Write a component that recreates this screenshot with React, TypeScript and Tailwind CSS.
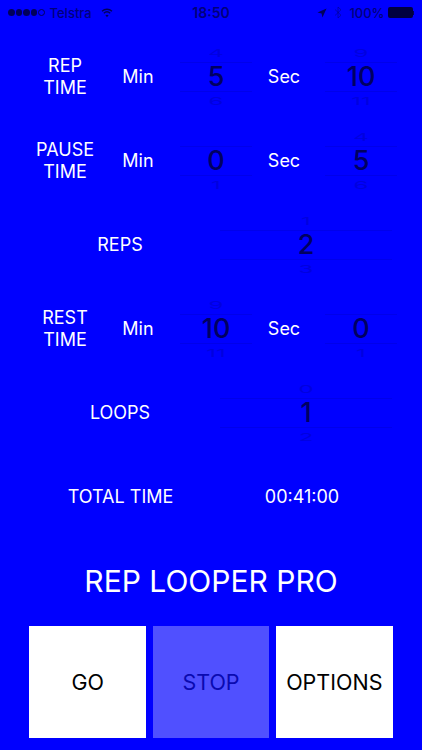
import React from "react";

function Picker({ prev, value, next, w }: { prev: string; value: string; next: string; w: string }) {
  return (
    <div className={`flex h-[60px] shrink-0 flex-col items-center overflow-hidden ${w}`}>
      <div className="flex h-[15px] w-full shrink-0 items-end justify-center">
        <span className="mb-[3px] scale-y-[0.45] text-[24px] leading-[12px] text-[#00007f] opacity-25">{prev}</span>
      </div>
      <div className="flex h-[30px] w-full shrink-0 items-center justify-center border-y border-[#0000ea] text-[27px] font-medium leading-[30px] text-[#000060]">
        {value}
      </div>
      <div className="flex h-[15px] w-full shrink-0 items-start justify-center">
        <span className="mt-[3px] scale-y-[0.45] text-[24px] leading-[12px] text-[#00007f] opacity-25">{next}</span>
      </div>
    </div>
  );
}

function Label({ children, className = "" }: { children: React.ReactNode; className?: string }) {
  return <div className={`text-center text-[18px] leading-[22px] text-white ${className}`}>{children}</div>;
}

type Triple = [string, string, string];

function TimeRow({ label, min, sec }: { label: React.ReactNode; min: Triple; sec: Triple }) {
  return (
    <div className="flex h-[84px] items-center">
      <Label className="ml-[15px] w-[100px] shrink-0">{label}</Label>
      <Label className="ml-[1px] w-[44px] shrink-0">Min</Label>
      <div className="ml-[20px]">
        <Picker prev={min[0]} value={min[1]} next={min[2]} w="w-[72px]" />
      </div>
      <Label className="ml-[8px] w-[48px] shrink-0">Sec</Label>
      <div className="ml-[17px]">
        <Picker prev={sec[0]} value={sec[1]} next={sec[2]} w="w-[72px]" />
      </div>
    </div>
  );
}

function SingleRow({ label, prev, value, next }: { label: string; prev: string; value: string; next: string }) {
  return (
    <div className="flex h-[84px] items-center">
      <Label className="w-[212px] shrink-0 pl-[28px]">{label}</Label>
      <Picker prev={prev} value={value} next={next} w="w-[180px] pl-[8px]" />
    </div>
  );
}

function StatusBar() {
  return (
    <div className="flex h-[24px] shrink-0 items-center px-[8px] pt-[1px] text-[13px] font-medium leading-[16px] text-[#00007a]">
      <div className="flex w-[160px] items-center">
        <div className="flex gap-[1px]">
          {[0, 1, 2, 3].map((i) => (
            <span key={i} className="h-[6.5px] w-[6.5px] rounded-full bg-[#00005a]" />
          ))}
          <span className="h-[6.5px] w-[6.5px] rounded-full border border-[#00005a]" />
        </div>
        <span className="ml-[5px]">Telstra</span>
        <svg className="ml-[9px]" width="12" height="10" viewBox="0 0 12 10" fill="none" stroke="#00005a" strokeWidth="1.3">
          <path d="M1 3.2c2.8-2.6 7.2-2.6 10 0" />
          <path d="M2.8 5.2c1.8-1.6 4.6-1.6 6.4 0" />
          <path d="M6 9.2 4.4 7.3c1-.8 2.2-.8 3.2 0z" fill="#00005a" stroke="none" />
        </svg>
      </div>
      <div className="w-[86px] text-center text-[14px] font-semibold">18:50</div>
      <div className="flex flex-1 items-center justify-end">
        <svg width="10" height="10" viewBox="0 0 11 11" fill="#00005a">
          <path d="M10.5.5 6 10.5 5 6 .5 5z" />
        </svg>
        <svg className="ml-[7px]" width="8" height="13" viewBox="0 0 8 13" fill="none" stroke="#00007a" strokeOpacity="0.5" strokeWidth="1">
          <path d="M1 3.5 7 9.2 4 12V1l3 2.8L1 9.5" />
        </svg>
        <span className="ml-[7px]">100%</span>
        <div className="ml-[3px] flex items-center">
          <div className="h-[11px] w-[25px] rounded-[2px] bg-[#000040]" />
          <div className="h-[4px] w-[1.5px] bg-[#000060]" />
        </div>
      </div>
    </div>
  );
}

function Btn({ children, dim }: { children: string; dim?: boolean }) {
  return (
    <button
      className={`flex h-[112px] w-[116.67px] items-center justify-center text-[21.5px] ${dim ? "bg-[#5050ff] text-[#0a0ab0]" : "bg-white text-black"}`}
    >
      {children}
    </button>
  );
}

export default function App() {
  return (
    <div className="flex h-[750px] w-[422px] flex-col overflow-hidden bg-[#0000ff] font-['Inter','Liberation_Sans',sans-serif]">
      <StatusBar />
      <div className="h-[11px] shrink-0" />
      <TimeRow label={<>REP<br />TIME</>} min={["4", "5", "6"]} sec={["9", "10", "11"]} />
      <TimeRow label={<>PAUSE<br />TIME</>} min={["", "0", "1"]} sec={["4", "5", "6"]} />
      <SingleRow label="REPS" prev="1" value="2" next="3" />
      <TimeRow label={<>REST<br />TIME</>} min={["9", "10", "11"]} sec={["", "0", "1"]} />
      <SingleRow label="LOOPS" prev="0" value="1" next="2" />
      <div className="flex h-[84px] items-center">
        <Label className="w-[241px] shrink-0">TOTAL TIME</Label>
        <Label className="w-[122px] shrink-0">00:41:00</Label>
      </div>
      <div className="flex h-[84px] items-center justify-center text-[30px] leading-[34px] text-white">REP LOOPER PRO</div>
      <div className="mt-[3px] flex justify-center gap-[6.67px]">
        <Btn>GO</Btn>
        <Btn dim>STOP</Btn>
        <Btn>OPTIONS</Btn>
      </div>
    </div>
  );
}
